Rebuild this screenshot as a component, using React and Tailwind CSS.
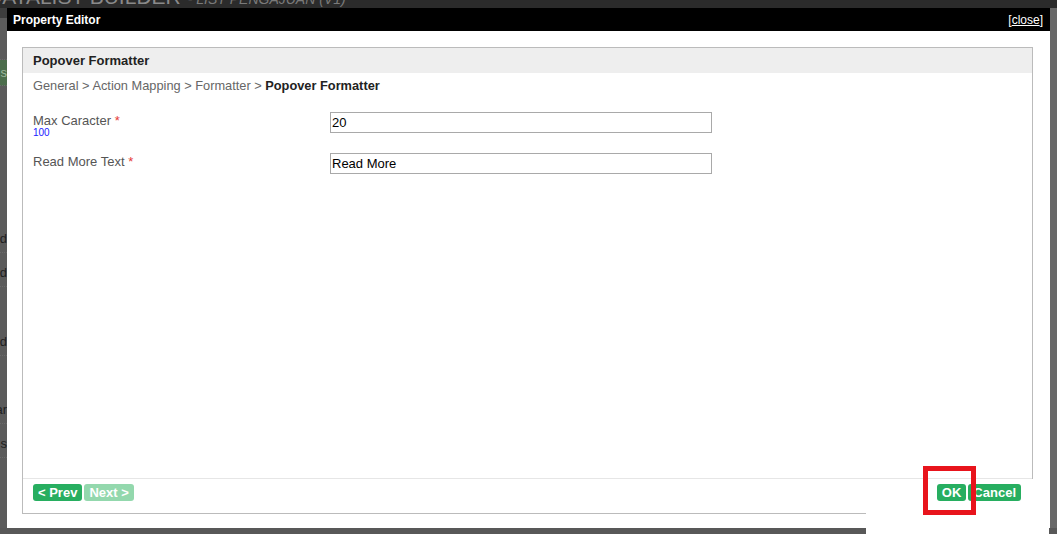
const fields = [
  { label: "Max Caracter", hint: "100", value: "20" },
  { label: "Read More Text", value: "Read More" }
];

const sideRows = [
  { h: "h-[42px]", text: "" },
  { h: "h-[26px]", text: "s", green: true },
  { h: "h-[167px]", text: "d" },
  { h: "h-[34px]", text: "d" },
  { h: "h-[69px]", text: "d" },
  { h: "h-[68px]", text: "ar" },
  { h: "h-[34px]", text: "s" }
];

function SideStrip() {
  return (
    <div className="w-[7px] h-full overflow-hidden bg-[#5b5b5b] flex flex-col">
      <div className="h-[10px] shrink-0 bg-[#3d3d3d]" />
      {sideRows.map((row, i) => (
        <div key={i} className={`${row.h} shrink-0 flex items-end border-b border-dotted border-[#6a6a6a] ${row.green ? "bg-[#4c6d4c]" : ""}`}>
          <div className={`w-[40px] -ml-[33px] text-right text-[13px] leading-[18px] ${row.green ? "pb-[3px] text-[#9cb89c]" : "pb-[4px] text-[#1e1e1e]"}`}>{row.text}</div>
        </div>
      ))}
    </div>
  );
}

function GreenButton({ children, light }) {
  return (
    <button className={`relative z-10 h-[17px] px-[5px] rounded-[3px] text-[13px] font-bold leading-[17px] text-white ${light ? "bg-[#93d8ad]" : "bg-[#27ae60]"}`}>
      {children}
    </button>
  );
}

export default function App() {
  return (
    <div className="relative w-[1057px] h-[534px] overflow-hidden bg-[#585858] flex flex-col" style={{ fontFamily: '"Liberation Sans", Arial, sans-serif' }}>
      {/* page header behind the dialog */}
      <div className="h-[8px] shrink-0 overflow-hidden bg-[#2b2b2b]">
        <div className="-mt-[15px] -ml-[13px] flex items-baseline gap-[7px] whitespace-nowrap">
          <span className="text-[21px] leading-[23px] text-[#8a8a8a]">DATALIST BUILDER</span>
          <span className="text-[14px] italic text-[#7a7a7a]">- LIST PENGAJUAN (V1)</span>
        </div>
      </div>

      <div className="flex h-[520px] shrink-0">
        <SideStrip />

        {/* dialog */}
        <div className="w-[1043px] flex flex-col bg-white">
          <div className="h-[23px] shrink-0 bg-black flex items-center justify-between pl-[6px] pr-[7px] text-white text-[12px]">
            <span className="font-bold">Property Editor</span>
            <span>[<span className="underline">close</span>]</span>
          </div>

          <div className="flex-1 pt-[16px] pl-[15px] pr-[17px] pb-[14px]">
            <div className="h-full border border-[#bbbbbb] flex flex-col">
              <div className="h-[25px] shrink-0 bg-[#eeeeee] flex items-center pl-[10px] text-[13px] font-bold text-[#222]">
                Popover Formatter
              </div>
              <div className="pl-[10px] pt-[5px] text-[12.8px] leading-[16px] text-[#666]">
                General &gt; Action Mapping &gt; Formatter &gt; <span className="font-bold text-[#222]">Popover Formatter</span>
              </div>

              <div className="flex-1 pl-[10px] pt-[18px] flex flex-col gap-[15px]">
                {fields.map((f) => (
                  <div key={f.label} className="flex items-start">
                    <div className="w-[297px] pt-[1px] text-[13px] leading-[15px] text-[#555]">
                      {f.label} <span className="text-[#e53935]">*</span>
                      {f.hint && <div className="text-[10px] leading-[11px] -mt-[1px] text-[#2020ff]">{f.hint}</div>}
                    </div>
                    <div className="w-[382px] h-[21px] border border-[#a9a9a9] px-[1px] text-[13px] leading-[19px] text-black">
                      {f.value}
                    </div>
                  </div>
                ))}
              </div>

              <div className="h-[35px] shrink-0 border-t border-[#e6e6e6] flex items-start justify-between pt-[5px] pl-[10px] pr-[11px]">
                <div className="flex gap-[2px]">
                  <GreenButton>&lt; Prev</GreenButton>
                  <GreenButton light>Next &gt;</GreenButton>
                </div>
                <div className="flex gap-[2px]">
                  <GreenButton>OK</GreenButton>
                  <GreenButton>Cancel</GreenButton>
                </div>
              </div>
            </div>
          </div>
        </div>

        <div className="w-[7px] bg-[#686868]" />
      </div>

      {/* pasted screenshot patch + highlight */}
      <div className="absolute left-[866px] top-[479px] w-[183px] h-[55px] bg-white" />
      <div className="absolute left-[923px] top-[466px] w-[53px] h-[49px] border-[5px] border-[#e8141c] z-30" />
    </div>
  );
}
